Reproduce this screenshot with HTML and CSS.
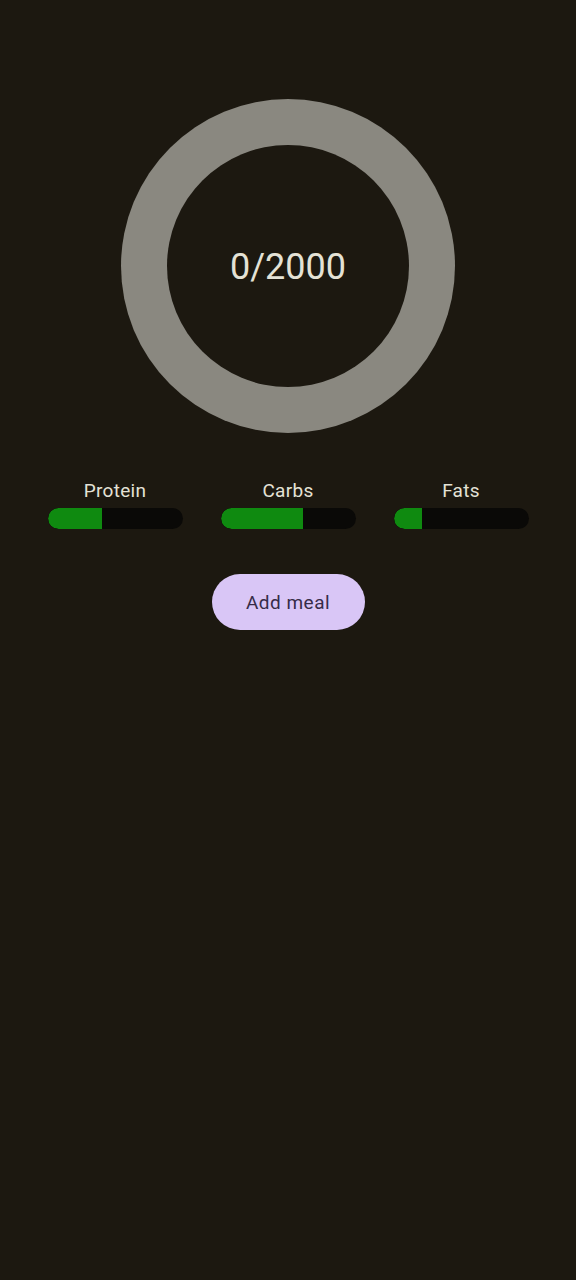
FILE: index.html
```html
<!DOCTYPE html>
<html>
<head>
<meta charset="utf-8">
<link rel="stylesheet" href="styles.css">
</head>
<body>
<main class="screen">
  <div class="ring">
    <div class="ring-inner">
      <span class="calories">0/2000</span>
    </div>
  </div>
  <div class="macros">
    <div class="macro">
      <span class="macro-label">Protein</span>
      <div class="track"><div class="fill" style="width:40%"></div></div>
    </div>
    <div class="macro">
      <span class="macro-label">Carbs</span>
      <div class="track"><div class="fill" style="width:61%"></div></div>
    </div>
    <div class="macro">
      <span class="macro-label">Fats</span>
      <div class="track"><div class="fill" style="width:21%"></div></div>
    </div>
  </div>
  <button class="add-btn">Add meal</button>
</main>
</body>
</html>
```

FILE: styles.css
```css
html, body {
  margin: 0;
  padding: 0;
  background: #1c1810;
}
body {
  width: 576px;
  height: 1280px;
  font-family: Roboto, "Noto Sans", sans-serif;
}
.screen {
  display: flex;
  flex-direction: column;
  align-items: center;
  padding-top: 99px;
}
.ring {
  width: 334px;
  height: 334px;
  border-radius: 50%;
  background: #8a8880;
  display: flex;
  align-items: center;
  justify-content: center;
}
.ring-inner {
  width: 242px;
  height: 242px;
  border-radius: 50%;
  background: #1c1810;
  display: flex;
  align-items: center;
  justify-content: center;
}
.calories {
  color: #e4e2d6;
  font-size: 36px;
  line-height: 1;
  padding-top: 2px;
}
.macros {
  margin-top: 46px;
  width: 481px;
  display: flex;
  justify-content: space-between;
}
.macro {
  width: 135px;
  display: flex;
  flex-direction: column;
  align-items: center;
  gap: 5px;
}
.macro-label {
  color: #e4e2d6;
  font-size: 19px;
  letter-spacing: 0.3px;
  line-height: 24px;
}
.track {
  width: 135px;
  height: 21px;
  border-radius: 10.5px;
  background: #0a0907;
  overflow: hidden;
}
.fill {
  height: 100%;
  background: #0f8a10;
  border-radius: 10.5px 0 0 10.5px;
}
.add-btn {
  margin-top: 45px;
  width: 153px;
  height: 56px;
  border: none;
  border-radius: 28px;
  background: #d9c6f6;
  color: #362c48;
  font-family: Roboto, "Noto Sans", sans-serif;
  font-size: 19px;
  letter-spacing: 0.5px;
  padding: 0;
}
```
